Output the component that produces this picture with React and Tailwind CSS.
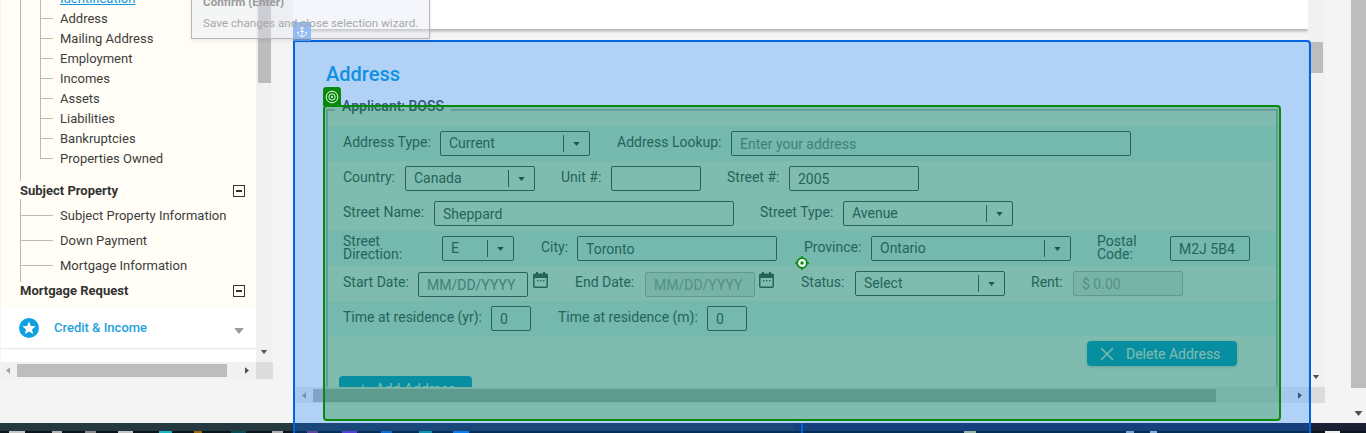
import React from "react";
import { Anchor, X, Plus } from "lucide-react";

function Tri({ dir = "down", className = "" }) {
  const pts = { down: "0,0 8,0 4,5", left: "5,0 5,8 0,4", right: "0,0 0,8 5,4" }[dir];
  const box = dir === "down" ? "0 0 8 5" : "0 0 5 8";
  return (
    <svg viewBox={box} className={className}>
      <polygon points={pts} fill="currentColor" />
    </svg>
  );
}

function Label({ w, className = "pb-[3px]", children }) {
  return <span className={`${w} mr-[10px] shrink-0 whitespace-nowrap ${className}`}>{children}</span>;
}

function Input({ w, value, placeholder, disabled, className = "" }) {
  let tone = "border-[#495057] text-[#495057]";
  if (disabled) tone = "bg-[#f0f0f0] border-[#bdbdbd] text-[#a8a8a8]";
  else if (placeholder) tone = "border-[#495057] text-[#7f8a92]";
  return (
    <div className={`${w} h-[25px] shrink-0 rounded-[2px] border px-[8px] flex items-center ${tone} ${className}`}>
      <span className="pt-px">{value || placeholder}</span>
    </div>
  );
}

function Select({ w, value }) {
  return (
    <div className={`${w} h-[25px] shrink-0 rounded-[2px] border border-[#495057] pl-[8px] flex items-center justify-between text-[#495057]`}>
      <span className="pb-px">{value}</span>
      <div className="flex h-[17px] w-[26px] items-center justify-center border-l border-[#495057]">
        <Tri className="h-[4px] w-[7px] text-[#343a40]" />
      </div>
    </div>
  );
}

function Calendar({ className = "" }) {
  return (
    <svg viewBox="0 0 15 16" className={`h-[16px] w-[15px] shrink-0 self-start mt-[6px] text-[#495057] ${className}`}>
      <rect x="0.75" y="2.25" width="13.5" height="13" rx="1" fill="none" stroke="currentColor" strokeWidth="1.5" />
      <rect x="0.5" y="2" width="14" height="4" fill="currentColor" />
      <rect x="3" y="0" width="2" height="3" fill="currentColor" />
      <rect x="10" y="0" width="2" height="3" fill="currentColor" />
      <rect x="4" y="8" width="1.4" height="1.4" fill="currentColor" />
      <rect x="7" y="8" width="1.4" height="1.4" fill="currentColor" />
      <rect x="10" y="8" width="1.4" height="1.4" fill="currentColor" />
    </svg>
  );
}

function Row({ dark, children }) {
  return (
    <div className={`flex h-[35px] shrink-0 items-center pl-[15px] ${dark ? "bg-[#e9f8ff]" : ""}`}>{children}</div>
  );
}

function MinusBox() {
  return (
    <div className="flex h-[12px] w-[12px] items-center justify-center border border-[#333]">
      <div className="h-[2px] w-[6px] bg-[#333]" />
    </div>
  );
}

function Heading({ children }) {
  return (
    <div className="flex h-[20px] items-center justify-between pl-[19px] pr-[11px] text-[13px] font-bold text-[#333]">
      <span>{children}</span>
      <MinusBox />
    </div>
  );
}

function Connector({ last }) {
  return (
    <div className="mr-[7px] flex h-full w-[13px] shrink-0 flex-col">
      <div className="h-1/2 border-b border-l border-[#c2baa8]" />
      <div className={last ? "h-1/2" : "h-1/2 border-l border-[#c2baa8]"} />
    </div>
  );
}

const group1 = ["Address", "Mailing Address", "Employment", "Incomes", "Assets", "Liabilities", "Bankruptcies", "Properties Owned"];
const group2 = ["Subject Property Information", "Down Payment", "Mortgage Information"];

function Sidebar() {
  return (
    <div className="ml-px flex w-[272px] shrink-0 flex-col text-[13px]">
      <div className="flex h-[362px] shrink-0">
        <div className="flex w-[255px] flex-col overflow-hidden bg-white">
          <div className="h-[307px] shrink-0 overflow-hidden bg-[#fffdf6] text-[#3d3d3d]">
            <div className="-mt-[11px] ml-[19px] h-[192px] border-l border-[#c2baa8] pl-[19px]">
              <div className="flex h-[20px] items-center">
                <div className="mr-[7px] h-full w-[13px] shrink-0 border-l border-[#c2baa8]" />
                <span className="text-[#0b96e0] underline">Identification</span>
              </div>
              {group1.map((t, i) => (
                <div key={t} className="flex h-[20px] items-center">
                  <Connector last={i === group1.length - 1} />
                  <span>{t}</span>
                </div>
              ))}
            </div>
            <Heading>Subject Property</Heading>
            <div className="ml-[19px] h-[83px] -mt-[2px] border-l border-[#c2baa8] pt-[4px]">
              {group2.map((t) => (
                <div key={t} className="flex h-[25px] items-center">
                  <div className="mr-[7px] h-px w-[32px] shrink-0 bg-[#c2baa8]" />
                  <span>{t}</span>
                </div>
              ))}
            </div>
            <div className="-mt-px">
              <Heading>Mortgage Request</Heading>
            </div>
          </div>
          <div className="flex h-[42px] shrink-0 items-center border-b border-[#e6e6e6] pl-[18px] pr-[11px]">
            <svg viewBox="0 0 20 20" className="h-[20px] w-[20px] shrink-0">
              <circle cx="10" cy="10" r="10" fill="#0ea0e0" />
              <polygon points="10,3.6 11.9,8 16.6,8.3 13,11.4 14.1,16 10,13.6 5.9,16 7,11.4 3.4,8.3 8.1,8" fill="#fff" />
            </svg>
            <span className="ml-[15px] font-medium text-[#1f9fdc]">Credit &amp; Income</span>
            <Tri className="ml-auto mt-[6px] mr-px h-[6px] w-[10px] text-[#9b9b9b]" />
          </div>
        </div>
        <div className="flex w-[17px] shrink-0 flex-col bg-[#f1f1f1] px-[2px]">
          <div className="h-[83px] bg-[#bdbdbd]" />
          <Tri className="ml-[2px] mt-auto mb-[8px] h-[4px] w-[8px] text-[#505050]" />
        </div>
      </div>
      <div className="flex h-[17px] shrink-0">
        <div className="flex w-[255px] items-center bg-[#f1f1f1]">
          <Tri dir="left" className="ml-[5px] h-[7px] w-[4px] text-[#a3a3a3]" />
          <div className="ml-[7px] h-[13px] w-[210px] bg-[#bdbdbd]" />
          <Tri dir="right" className="ml-[18px] h-[7px] w-[4px] text-[#505050]" />
        </div>
        <div className="w-[17px] bg-[#dcdcdc]" />
      </div>
    </div>
  );
}

function Form() {
  return (
    <fieldset className="ml-[33px] mt-[13px] w-[952px] border-2 border-[#c4c8c6] pb-[60px]">
      <legend className="ml-[7px] px-[7px] pb-[8px] text-[14px] font-medium leading-[14px] text-[#495057]">Applicant: BOSS</legend>
      <div className="flex flex-col pt-[5px] text-[14px] leading-[16px] text-[#495057]">
        <Row dark>
          <Label w="w-[87px]">Address Type:</Label>
          <Select w="w-[150px]" value="Current" />
          <Label w="w-[104px]" className="ml-[27px] pb-[3px]">Address Lookup:</Label>
          <Input w="w-[400px]" placeholder="Enter your address" />
        </Row>
        <Row>
          <Label w="w-[52px]">Country:</Label>
          <Select w="w-[130px]" value="Canada" />
          <Label w="w-[40px]" className="ml-[26px] pb-[3px]">Unit #:</Label>
          <Input w="w-[90px]" />
          <Label w="w-[52px]" className="ml-[26px] pb-[3px]">Street #:</Label>
          <Input w="w-[130px]" value="2005" />
        </Row>
        <Row>
          <Label w="w-[81px]">Street Name:</Label>
          <Input w="w-[300px]" value="Sheppard" />
          <Label w="w-[73px]" className="ml-[26px] pb-[3px]">Street Type:</Label>
          <Select w="w-[170px]" value="Avenue" />
        </Row>
        <Row dark>
          <Label w="w-[89px]" className="pb-px leading-[13px]">Street<br />Direction:</Label>
          <Select w="w-[72px]" value="E" />
          <Label w="w-[26px]" className="ml-[27px] pb-[3px]">City:</Label>
          <Input w="w-[200px]" value="Toronto" />
          <Label w="w-[57px]" className="ml-[27px] pb-[3px]">Province:</Label>
          <Select w="w-[200px]" value="Ontario" />
          <Label w="w-[63px]" className="ml-[26px] pb-px leading-[13px]">Postal<br />Code:</Label>
          <Input w="w-[80px]" value="M2J 5B4" />
        </Row>
        <Row>
          <Label w="w-[65px]">Start Date:</Label>
          <Input w="w-[110px]" placeholder="MM/DD/YYYY" className="mt-[2px]" />
          <Calendar className="ml-[5px]" />
          <Label w="w-[60px]" className="ml-[27px] pb-[3px]">End Date:</Label>
          <Input w="w-[110px]" placeholder="MM/DD/YYYY" disabled className="mt-[2px]" />
          <Calendar className="ml-[4px]" />
          <Label w="w-[44px]" className="ml-[27px] pb-[3px]">Status:</Label>
          <Select w="w-[150px]" value="Select" />
          <Label w="w-[32px]" className="ml-[26px] pb-[3px]">Rent:</Label>
          <Input w="w-[110px]" placeholder="$ 0.00" disabled />
        </Row>
        <Row dark>
          <Label w="w-[138px]">Time at residence (yr):</Label>
          <Input w="w-[40px]" value="0" />
          <Label w="w-[139px]" className="ml-[27px] pb-[3px]">Time at residence (m):</Label>
          <Input w="w-[40px]" value="0" />
        </Row>
        <div className="mt-[5px] flex justify-end pr-[39px]">
          <button className="flex h-[25px] w-[150px] items-center gap-[8px] rounded-[4px] bg-[#0ea5e4] pl-[9px] text-white shadow-[0_1px_3px_rgba(0,0,0,0.2)]">
            <X size={22} strokeWidth={1.5} />
            <span>Delete Address</span>
          </button>
        </div>
        <div className="mt-[10px] pl-[11px]">
          <button className="flex h-[25px] w-[133px] items-center justify-center gap-[6px] rounded-[4px] bg-[#0ea5e4] text-white">
            <Plus size={14} />
            <span>Add Address</span>
          </button>
        </div>
      </div>
    </fieldset>
  );
}

function Content() {
  return (
    <div className="ml-[20px] flex w-[1032px] shrink-0 flex-col">
      <div className="flex h-[387px] shrink-0">
        <div className="flex w-[1015px] flex-col overflow-hidden">
          <div className="h-[29px] shrink-0 bg-white shadow-[0_2px_3px_rgba(0,0,0,0.3)]" />
          <div className="mt-[12px] flex-1 bg-white pt-[21px]">
            <h2 className="ml-[33px] text-[20px] font-medium leading-[24px] text-[#14a4e0]">Address</h2>
            <Form />
          </div>
        </div>
        <div className="flex w-[17px] shrink-0 flex-col bg-[#f1f1f1] pl-[3px] pr-[2px]">
          <div className="mt-[42px] h-[31px] bg-[#bdbdbd]" />
          <Tri className="ml-[1px] mt-auto mb-[8px] h-[4px] w-[8px] text-[#505050]" />
        </div>
      </div>
      <div className="flex h-[16px] shrink-0">
        <div className="flex w-[1015px] items-center bg-[#f1f1f1]">
          <Tri dir="left" className="ml-[9px] h-[7px] w-[4px] text-[#a3a3a3]" />
          <div className="ml-[7px] h-[13px] w-[903px] bg-[#bdbdbd]" />
          <Tri dir="right" className="ml-[82px] h-[7px] w-[4px] text-[#505050]" />
        </div>
        <div className="w-[17px] bg-[#dcdcdc]" />
      </div>
      <div className="h-[20px] w-[1017px] bg-white" />
    </div>
  );
}

const taskIcons = [
  "ml-[9px] w-[16px] bg-[#c8c8c8]",
  "ml-[27px] w-[10px] bg-[#b5b5b5]",
  "ml-[23px] w-[11px] bg-[#8a8a8a]",
  "ml-[22px] w-[15px] bg-[#c4c4c4]",
  "ml-[26px] w-[13px] bg-[#19b7c4]",
  "ml-[22px] w-[8px] bg-[#a06c10]",
  "ml-[29px] w-[15px] bg-[#0a4a58]",
  "ml-[26px] w-[11px] bg-[#b0b0b0]",
  "ml-[24px] w-[11px] bg-[#8a3a8a]",
  "ml-[24px] w-[15px] bg-[#7a30d8]",
  "ml-[24px] w-[11px] bg-[#1070d0]",
  "ml-[27px] w-[13px] bg-[#18a8a0]",
  "ml-[21px] w-[16px] bg-[#1088f8]",
  "ml-[495px] w-[12px] bg-[#d8d890]",
  "ml-[150px] w-[8px] bg-[#b0c0d0]",
  "ml-[16px] w-[7px] bg-[#c0d0e0]",
  "ml-[168px] w-[15px] bg-[#f0f0f0]",
];

function Taskbar() {
  return (
    <div className="flex h-[10px] shrink-0 flex-col bg-[#24393f]">
      <div className="flex h-[8px] shrink-0">
        <div className="w-[293px] bg-[#24393f]" />
        <div className="w-[500px] bg-[#243a4c]" />
        <div className="w-[517px] bg-[#1f3050]" />
        <div className="flex-1 bg-[#1b2034]" />
      </div>
      <div className="flex h-[2px] shrink-0 bg-[#0a151c]">
        {taskIcons.map((c) => (
          <div key={c} className={`h-[2px] ${c}`} />
        ))}
      </div>
    </div>
  );
}

function Overlays() {
  return (
    <>
      <div className="absolute left-[293px] top-[40px] h-[400px] w-[1018px] rounded-tr-[4px] border-2 border-[#0065e0] bg-[rgba(0,102,224,0.3)]" />
      <div className="absolute left-[801px] top-[423px] h-[10px] w-[2px] bg-[#0065e0]" />
      <div className="absolute left-[323px] top-[105px] h-[316px] w-[958px] rounded-[4px] border-2 border-[#098a0c] bg-[rgba(4,135,0,0.29)]" />
      <div className="absolute left-[323px] top-[87px] flex h-[19px] w-[18px] items-center justify-center rounded-t-[3px] bg-[#098a0c]">
        <svg viewBox="0 0 14 14" className="h-[14px] w-[14px]" fill="none" stroke="#fff">
          <circle cx="7" cy="7" r="5.8" strokeWidth="0.9" />
          <circle cx="7" cy="7" r="3.2" strokeWidth="0.9" />
          <circle cx="7" cy="7" r="1" fill="#fff" stroke="none" />
        </svg>
      </div>
      <svg viewBox="0 0 14 14" className="absolute left-[795px] top-[256px] h-[14px] w-[14px]">
        <circle cx="7" cy="7" r="4.8" fill="#fff" stroke="#098a0c" strokeWidth="1.8" />
        <circle cx="7" cy="7" r="1.7" fill="#098a0c" />
        <path d="M7 0v2M7 12v2M0 7h2M12 7h2" stroke="#098a0c" strokeWidth="1.4" />
      </svg>
      <div className="absolute left-[293px] top-[22px] flex h-[19px] w-[18px] items-center justify-center bg-[#5f9cf0]">
        <Anchor size={12} color="#fff" strokeWidth={2} />
      </div>
      <div className="absolute left-[191px] top-[-20px] h-[59px] w-[239px] border border-[#b5b5b5] bg-[rgba(228,232,246,0.4)] pl-[11px] pt-[14px] text-[11.7px] leading-[14px] shadow-[0_2px_4px_rgba(0,0,0,0.08)]">
        <div className="font-bold text-[#9a9a9a]">Confirm (Enter)</div>
        <div className="mt-[7px] text-[#a8a8a8]">Save changes and close selection wizard.</div>
      </div>
    </>
  );
}

export default function App() {
  return (
    <div className="relative flex h-[433px] w-[1366px] flex-col overflow-hidden bg-[#f4f4f4] font-['Roboto',sans-serif]">
      <div className="flex h-[423px] shrink-0">
        <Sidebar />
        <Content />
        <div className="ml-[26px] flex w-[15px] shrink-0 flex-col">
          <div className="h-[388px] bg-[#bdbdbd]" />
          <Tri className="ml-[3px] mt-[23px] h-[5px] w-[9px] text-[#505050]" />
        </div>
      </div>
      <Taskbar />
      <Overlays />
    </div>
  );
}
